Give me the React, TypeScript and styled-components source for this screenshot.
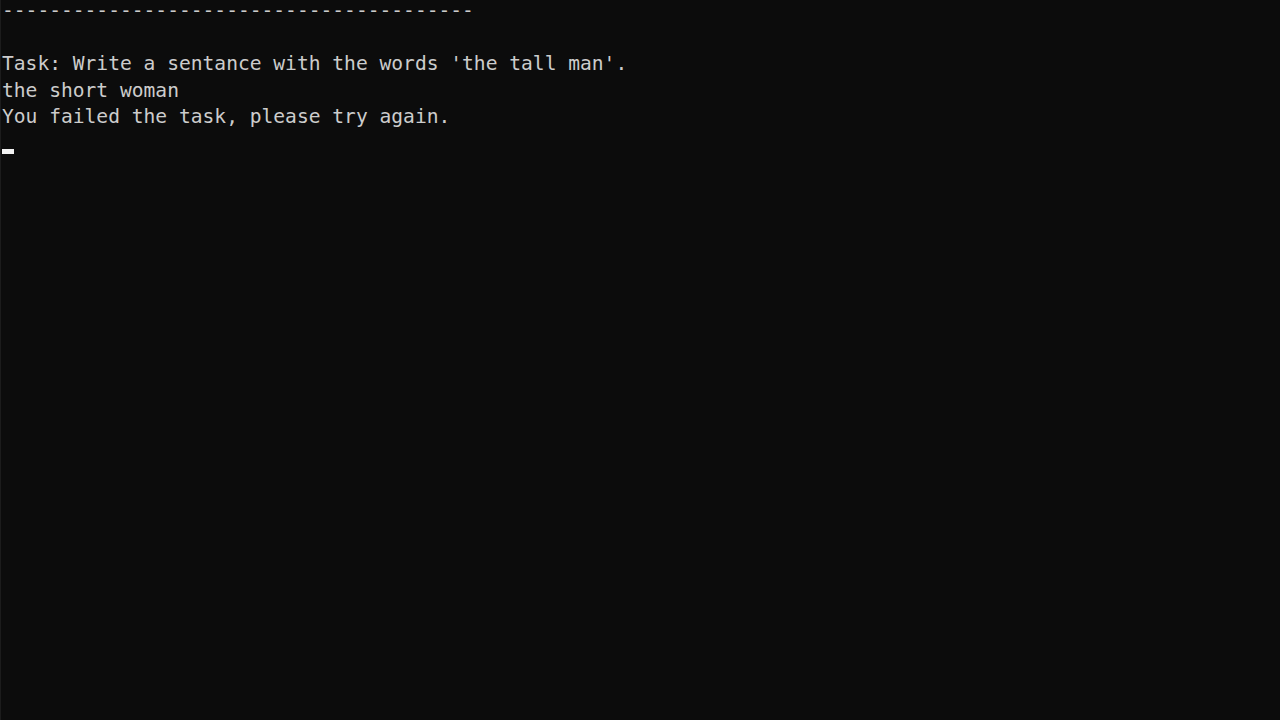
import React from "react";
import styled, { createGlobalStyle } from "styled-components";

const Global = createGlobalStyle`
  html, body {
    margin: 0;
    padding: 0;
    background: #0c0c0c;
    overflow: hidden;
  }
`;

const Window = styled.div`
  width: 1280px;
  height: 720px;
  background: #0c0c0c;
  border-left: 1px solid #1c1c1c;
  box-sizing: border-box;
  overflow: hidden;
`;

const Console = styled.pre`
  margin: -2px 0 0 1px;
  font-family: "DejaVu Sans Mono", "Liberation Mono", monospace;
  font-size: 19.6px;
  line-height: 26.5px;
  color: #cccccc;
  white-space: pre;
`;

const Line = styled.div`
  height: 26.5px;
`;

const Cursor = styled.span`
  display: inline-block;
  width: 12px;
  height: 5px;
  background: #f2f2f2;
  vertical-align: -4px;
`;

const lines = [
  "----------------------------------------",
  "",
  "Task: Write a sentance with the words 'the tall man'.",
  "the short woman",
  "You failed the task, please try again.",
];

export default function App() {
  return (
    <>
      <Global />
      <Window>
        <Console>
          {lines.map((l, i) => (
            <Line key={i}>{l}</Line>
          ))}
          <Line>
            <Cursor />
          </Line>
        </Console>
      </Window>
    </>
  );
}
